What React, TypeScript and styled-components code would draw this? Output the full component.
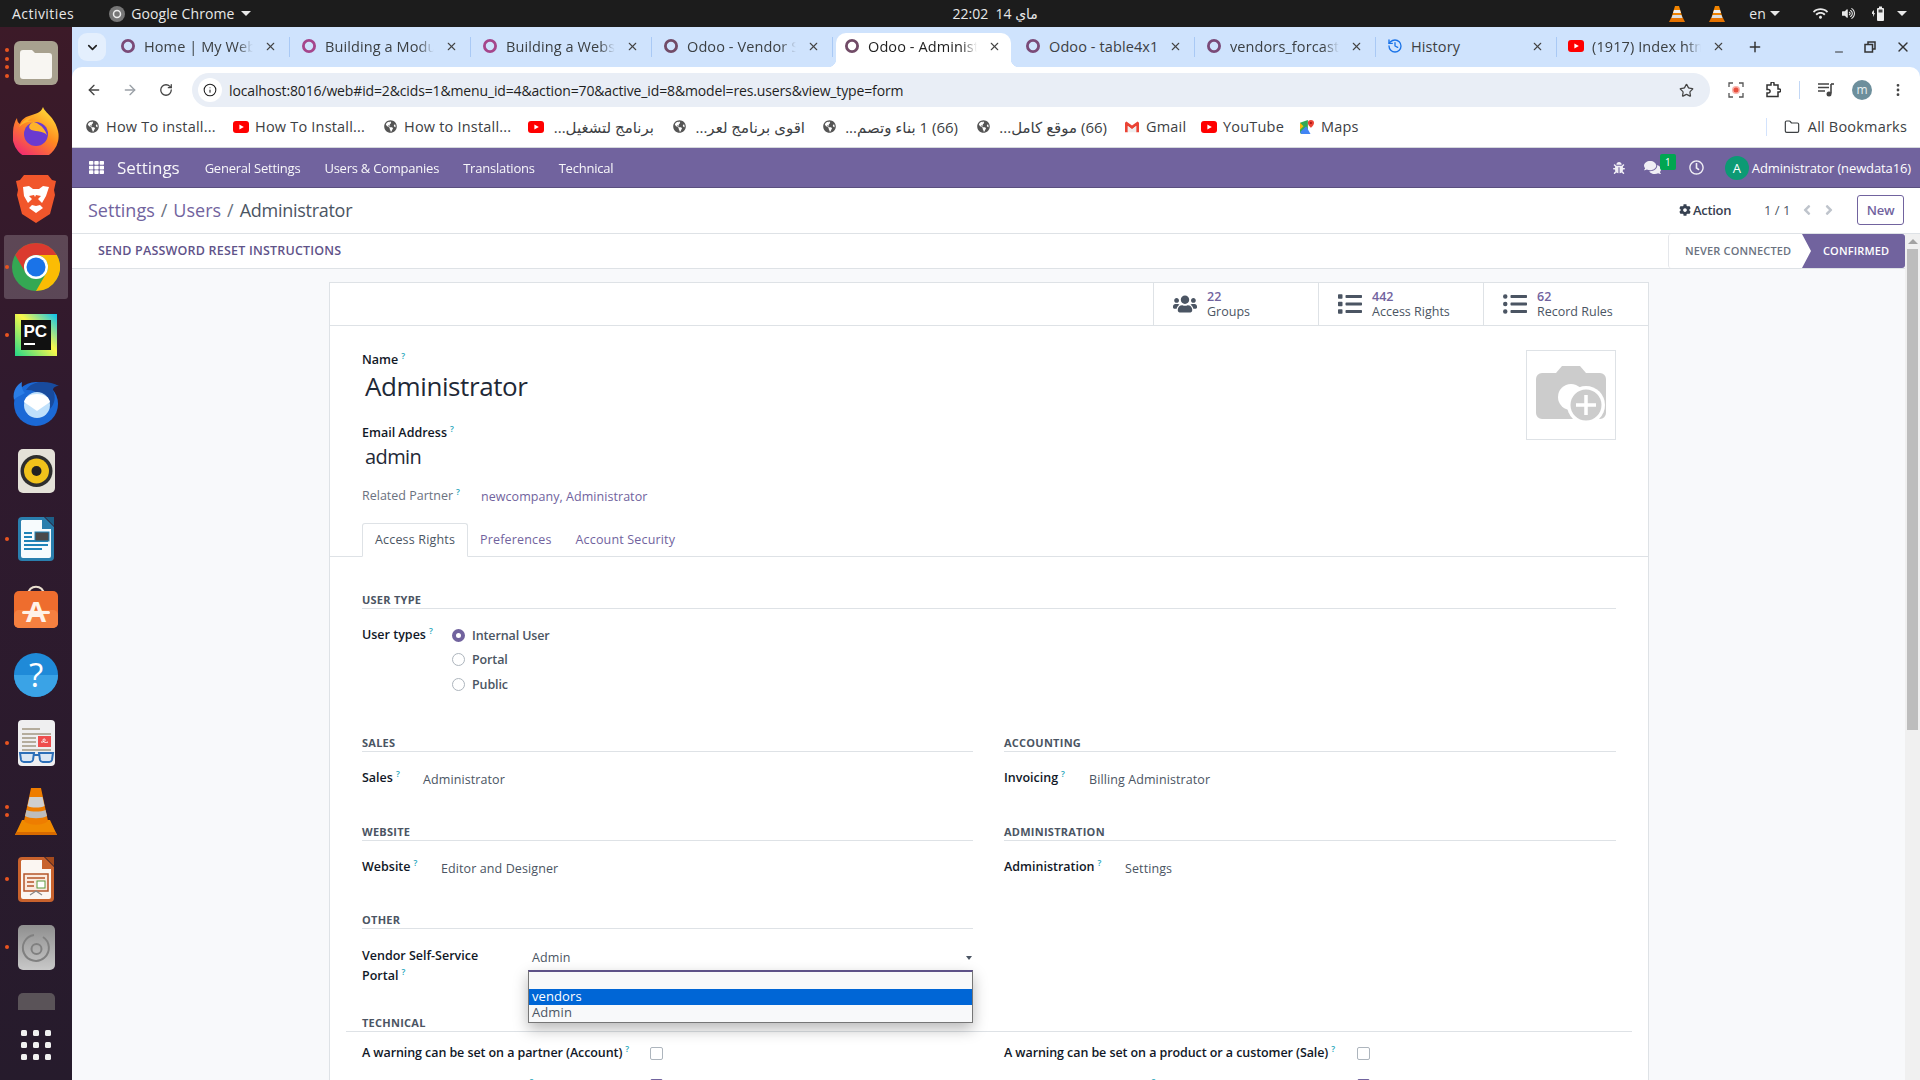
import React from "react";
import styled, { createGlobalStyle } from "styled-components";
import { ArrowLeft, ArrowRight, RotateCw, Star, Info, History, Plus, X, Minus, ChevronDown, Folder, MoreVertical } from "lucide-react";
import { FaUsers, FaList, FaListUl, FaBug, FaComments, FaRegClock, FaCog, FaTh, FaAngleLeft, FaAngleRight, FaGlobeAmericas, FaWifi, FaVolumeUp } from "react-icons/fa";

const UI = `"Open Sans", "DejaVu Sans", sans-serif`;
const PURPLE = "#71639e";

const Global = createGlobalStyle`
  html, body { margin: 0; padding: 0; height: 100%; overflow: hidden; }
  #root { height: 100%; }
  * { box-sizing: border-box; }
  body { font-family: ${UI}; font-size: 13px; color: #374151; }
`;

const Screen = styled.div`display: grid; grid-template-rows: 27px 1fr; height: 1080px; width: 1920px; overflow: hidden;`;

/* ---- GNOME top bar ---- */
const TopBar = styled.div`display: flex; align-items: center; background: #1c1c1c; color: #e8e8e8; font-size: 14px; padding-left: 12px; letter-spacing: 0.1px;`;
const Activities = styled.span`letter-spacing: 0.45px;`;
const AppMenu = styled.div`display: flex; align-items: center; gap: 6px; margin-left: 35px;`;
const Caret = styled.span<{ $ml?: number }>`display: inline-block; width: 0; height: 0; border-left: 5px solid transparent; border-right: 5px solid transparent; border-top: 5px solid #e8e8e8; margin-left: ${p => p.$ml ?? 0}px;`;
const Clock = styled.div`margin-left: 702px; white-space: pre; font-size: 14px;`;
const Tray = styled.div`display: flex; align-items: center; margin-left: auto; padding-right: 15px; height: 100%;`;
const TrayItem = styled.span<{ $w: number; $ml?: number }>`display: inline-flex; align-items: center; justify-content: center; width: ${p => p.$w}px; margin-left: ${p => p.$ml ?? 0}px;`;

/* ---- Body ---- */
const Desk = styled.div`display: flex; min-height: 0;`;
const Dock = styled.div`width: 72px; flex: none; padding-top: 2px; background: linear-gradient(180deg, #3c1a28 0%, #301a2e 35%, #261b2c 100%); overflow: hidden; display: flex; flex-direction: column;`;
const DockItem = styled.div<{ $active?: boolean; $h?: number }>`position: relative; height: ${p => p.$h ?? 68}px; flex: none; display: flex; align-items: ${p => (p.$h ? "flex-start" : "center")}; justify-content: center; overflow: hidden; padding-top: ${p => (p.$h ? 12 : 0)}px;
  &::before { content: ""; display: ${p => (p.$active ? "block" : "none")}; position: absolute; left: 4px; right: 4px; top: 2px; bottom: 2px; border-radius: 3px; background: rgba(255,255,255,0.2); }
  svg { position: relative; }`;
const RunDots = styled.div`position: absolute; left: 5px; top: 0; bottom: 0; display: flex; flex-direction: column; justify-content: center; gap: 4.5px;`;
const RunDot = styled.i`display: block; width: 4px; height: 4px; border-radius: 50%; background: #e95420;`;
const AppGrid = styled.div`flex: none; height: 70px; display: grid; grid-template-columns: repeat(3, 6px); gap: 6px; justify-content: center; align-content: center;`;
const AppDot = styled.i`display: block; width: 6px; height: 6px; border-radius: 1.5px; background: #f0f0f0;`;

const Browser = styled.div`flex: 1; min-width: 0; display: flex; flex-direction: column; background: #fff;`;
const Head = styled.div`background: #cfe3fd;`;
const TabStrip = styled.div`display: flex; height: 40px; padding-top: 6px; align-items: stretch;`;
const TabMenu = styled.div`width: 28px; height: 28px; margin: 0 3px 0 6px; border-radius: 9px; background: #e4effd; display: flex; align-items: center; justify-content: center; color: #222;`;
const Tab = styled.div<{ $active?: boolean; $last?: boolean }>`position: relative; width: 181px; flex: none; height: 34px; display: flex; align-items: center; padding: 0 11px 8px 11px; gap: 8px; font-size: 14.5px; letter-spacing: 0.1px; color: ${p => (p.$active ? "#1f1f1f" : "#3c4043")}; z-index: ${p => (p.$active ? 1 : 0)};
  ${p => p.$active ? `
    background: #fff; border-radius: 10px 10px 0 0; margin: 0 3px; width: 175px; padding-left: 8px; padding-right: 8px;
    &::before, &::after { content: ""; position: absolute; bottom: 0; width: 8px; height: 8px; }
    &::before { left: -8px; background: radial-gradient(circle at 0 0, transparent 8px, #fff 8.5px); }
    &::after { right: -8px; background: radial-gradient(circle at 100% 0, transparent 8px, #fff 8.5px); }
  ` : p.$last ? "" : `&::after { content: ""; position: absolute; right: 0; top: 4px; height: 20px; width: 1.5px; background: #a9c9f5; }`}`;
const TabTitle = styled.span<{ $fade?: boolean }>`flex: 1; min-width: 0; white-space: nowrap; ${p => p.$fade ? `mask-image: linear-gradient(90deg, #000 86%, transparent 100%);` : ""}`;
const TabClose = styled.span`width: 18px; display: flex; justify-content: center; color: #444;`;
const StripPlus = styled.div`width: 34px; display: flex; align-items: center; justify-content: center; height: 28px; color: #333;`;
const WinButtons = styled.div`margin-left: auto; display: flex; height: 28px; align-items: center; color: #333; padding-right: 9px; gap: 13px;`;

const Toolbar = styled.div`height: 43px; padding-top: 3px; background: #fff; border-radius: 10px 10px 0 0; display: flex; align-items: center; color: #444;`;
const NavIcon = styled.span<{ $w: number; $c?: string }>`width: ${p => p.$w}px; flex: none; display: inline-flex; justify-content: center; align-items: center; color: ${p => p.$c ?? "#444"};`;
const Omnibox = styled.div`width: 1518px; height: 34px; margin-left: 4px; border-radius: 17px; background: #e9eef6; display: flex; align-items: center; padding: 0 16px 0 6px;`;
const InfoBadge = styled.span`width: 24px; height: 24px; border-radius: 50%; background: #fff; display: flex; align-items: center; justify-content: center; color: #1f1f1f;`;
const Url = styled.span`margin-left: 7px; font-size: 14px; color: #1f1f1f; letter-spacing: -0.14px; white-space: nowrap;`;
const ToolDivider = styled.span`width: 1px; height: 18px; background: #c2d7f5; margin: 0 13px 0 15px;`;
const Avatar = styled.span`width: 20px; height: 20px; border-radius: 50%; background: #6d8f9c; color: #e8f0f0; font-size: 12px; display: flex; align-items: center; justify-content: center; line-height: 1;`;

const Bookmarks = styled.div`height: 38px; padding: 0 0 4px 13px; background: #fff; border-bottom: 1px solid #d5d8dc; display: flex; align-items: center; font-size: 14.5px; color: #3c4043; letter-spacing: 0.2px;`;
const Bookmark = styled.div<{ $w: number }>`display: flex; align-items: center; gap: 7px; width: ${p => p.$w}px; flex: none; white-space: nowrap;`;
const BookIcon = styled.span`width: 14px; height: 16px; flex: none; display: inline-flex; align-items: center; justify-content: center; color: #555;`;
const ArabicLabel = styled.bdi<{ $w: number }>`display: block; width: ${p => p.$w}px; font-size: 15px; letter-spacing: 0; text-align: right;`;
const AllBookmarks = styled.div`margin-left: auto; display: flex; align-items: center; gap: 8px; padding-right: 13px; border-left: 1.5px solid #d3e3fd; padding-left: 17px; height: 18px;`;

/* ---- Odoo ---- */
const NavBar = styled.div`height: 40px; background: ${PURPLE}; border-bottom: 1px solid #5a4f7f; color: #fff; display: flex; align-items: center; padding-left: 17px; font-size: 13px; letter-spacing: -0.12px;`;
const AppName = styled.div`font-size: 17px; margin: 0 25px 0 13px; letter-spacing: -0.05px; opacity: .95;`;
const NavMenu = styled.div`margin-right: 24px; opacity: .95; letter-spacing: -0.23px;`;
const NavRight = styled.div`margin-left: auto; display: flex; align-items: center; padding-right: 9px;`;
const NavGlyph = styled.span<{ $w: number }>`position: relative; width: ${p => p.$w}px; display: inline-flex; justify-content: center; color: #f0eef5;`;
const Badge = styled.span`position: absolute; top: -5px; right: -7px; width: 16px; height: 16px; border-radius: 2px; background: #00a651; font-size: 10px; display: flex; align-items: center; justify-content: center; color: #fff;`;
const UserDot = styled.span`width: 24px; height: 24px; border-radius: 50%; background: #0c9a74; display: flex; align-items: center; justify-content: center; font-size: 13px; margin-right: 3px;`;

const ControlPanel = styled.div`height: 46px; padding: 0 16px 2px 16px; background: #fff; border-bottom: 1px solid #dee2e6; display: flex; align-items: center;`;
const Crumbs = styled.div`font-size: 18px; color: #71639e; letter-spacing: 0; display: flex; gap: 6px;`;
const CrumbSep = styled.span`color: #6b7280;`;
const CrumbNow = styled.span`color: #4b5563; letter-spacing: -0.28px;`;
const CtrlRight = styled.div`margin-left: auto; display: flex; align-items: center; color: #374151;`;
const ActionBtn = styled.div`display: flex; align-items: center; gap: 2px; font-weight: 600; color: #374151; letter-spacing: -0.3px; width: 85px;`;
const Pager = styled.div`width: 35px; color: #4b5563;`;
const PagerArrows = styled.div`display: flex; gap: 6px; color: #bfc4cc; margin-right: 20px; font-size: 16px;`;
const NewBtn = styled.div`width: 47px; height: 30px; border: 1px solid ${PURPLE}; border-radius: 3px; color: ${PURPLE}; font-weight: 600; display: flex; align-items: center; justify-content: center; letter-spacing: -0.3px;`;

const MainRow = styled.div`flex: 1; min-height: 0; display: flex;`;
const MainCol = styled.div`flex: 1; min-width: 0; display: flex; flex-direction: column; background: #f8f9fb; overflow: hidden;`;
const Scrollbar = styled.div`width: 15px; flex: none; background: #f0f0f0; display: flex; flex-direction: column; align-items: center; padding-top: 5px;`;
const ScrollUp = styled.i`width: 0; height: 0; border-left: 5px solid transparent; border-right: 5px solid transparent; border-bottom: 5px solid #a3a3a3; margin-bottom: 5px;`;
const ScrollThumb = styled.div`width: 11px; height: 481px; background: #bdbdbd;`;

const StatusRow = styled.div`height: 35px; flex: none; background: #fff; border-bottom: 1px solid #dee2e6; display: flex; align-items: center; padding-left: 26px;`;
const SendBtn = styled.div`font-size: 12.5px; font-weight: 600; color: #5f5389; letter-spacing: 0.2px; margin-top: -2px;`;
const StatusBar = styled.div`margin-left: auto; display: flex; height: 100%; font-size: 11px; font-weight: 600; letter-spacing: 0.15px;`;
const StatusOff = styled.div`width: 144px; padding-left: 16px; padding-bottom: 2px; border-left: 1px solid #e5e7eb; border-radius: 3px 0 0 3px; display: flex; align-items: center; color: #6b7280; margin-right: -10px;`;
const StatusOn = styled.div`width: 103px; background: ${PURPLE}; color: #fff; display: flex; align-items: center; padding: 0 0 2px 21px; clip-path: polygon(0 0, 100% 0, 100% 100%, 0 100%, 9px 50%); border-radius: 0 3px 3px 0;`;

const Sheet = styled.div`width: 1320px; margin: 13px 0 0 257px; background: #fff; border: 1px solid #dee2e6; border-bottom: 0; flex: none;`;
const StatBar = styled.div`height: 43px; border-bottom: 1px solid #dee2e6; display: flex; justify-content: flex-end;`;
const StatBtn = styled.div`width: 165px; border-left: 1px solid #dee2e6; display: flex; align-items: center; padding-left: 19px; gap: 10px; color: #4b5563;`;
const StatText = styled.div`display: flex; flex-direction: column; font-size: 12.5px; line-height: 15px; letter-spacing: 0;`;
const StatNum = styled.span`color: ${PURPLE}; font-weight: 600;`;

const Head2 = styled.div`display: flex; justify-content: space-between; padding: 25px 32px 0 32px;`;
const FieldLabel = styled.div<{ $muted?: boolean; $w?: number }>`font-weight: ${p => (p.$muted ? 400 : 600)}; font-size: 12.5px; line-height: 18px; color: ${p => (p.$muted ? "#6b7280" : "#111827")}; letter-spacing: 0; white-space: nowrap; ${p => (p.$w ? `width: ${p.$w}px; flex: none;` : "")}`;
const Help = styled.sup`color: #17a2b8; font-size: 8.5px; font-weight: 600; margin-left: 3px; line-height: 0;`;
const NameValue = styled.div`font-size: 26px; line-height: 36px; margin-top: -1px; padding-left: 3px; color: #1f2937; letter-spacing: -0.4px;`;
const EmailBlock = styled.div`margin-top: 20px;`;
const EmailValue = styled.div`font-size: 20px; line-height: 28px; margin-top: 1px; padding-left: 3px; color: #1f2937; letter-spacing: -0.6px;`;
const RelatedRow = styled.div`display: flex; margin-top: 16px; align-items: center;`;
const RelatedLink = styled.span`margin-left: 19px; color: ${PURPLE}; font-size: 12.5px; letter-spacing: 0.05px;`;
const Photo = styled.div`width: 90px; height: 90px; margin-top: -1px; border: 1px solid #dee2e6; display: flex; align-items: center; justify-content: center;`;

const Tabs = styled.div`margin-top: 18px; height: 34px; border-bottom: 1px solid #dee2e6; padding-left: 32px; display: flex;`;
const FormTab = styled.div<{ $active?: boolean }>`height: 34px; display: flex; align-items: center; padding: 0 12px 2px; font-size: 12.5px; letter-spacing: 0.17px; color: ${p => (p.$active ? "#4b5563" : PURPLE)}; ${p => p.$active ? `background: #fff; border: 1px solid #dee2e6; border-bottom-color: #fff; border-radius: 3px 3px 0 0;` : ""}`;

const Pane = styled.div`padding: 35px 32px 0 32px;`;
const GroupTitle = styled.div<{ $wide?: boolean }>`height: 17px; border-bottom: 1px solid #dee2e6; font-size: 11px; font-weight: 700; color: #4b5563; line-height: 16px; letter-spacing: 0.25px; ${p => p.$wide ? `margin: 0 -16px; padding-left: 16px;` : ""}`;
const UserTypeRow = styled.div`display: flex; margin-top: 17px;`;
const UserTypeLabel = styled.div`width: 90px; flex: none;`;
const RadioList = styled.div`display: flex; flex-direction: column; gap: 6.5px;`;
const RadioRow = styled.div`display: flex; align-items: center; height: 18px; gap: 7px; font-size: 12.5px; font-weight: 600; color: #4b5563; letter-spacing: -0.12px;`;
const Radio = styled.i<{ $on?: boolean }>`width: 13px; height: 13px; border-radius: 50%; border: ${p => (p.$on ? `4px solid ${PURPLE}` : "1px solid #adb5bd")}; background: #fff; display: block;`;

const Columns = styled.div`display: grid; grid-template-columns: 611px 612px; column-gap: 31px; margin-top: 42px;`;
const Group = styled.div<{ $h: number }>`height: ${p => p.$h}px; position: relative;`;
const FieldRow = styled.div`display: flex; margin-top: 17px;`;
const FieldText = styled.div`margin-top: 2px; font-size: 12.5px; line-height: 18px; color: #4b5563; letter-spacing: 0.1px;`;
const VendorLabel = styled.div`width: 167px; flex: none; font-weight: 600; font-size: 12.5px; line-height: 20px; color: #111827; letter-spacing: 0;`;
const SelectBox = styled.div`position: relative; flex: 1; height: 18px; margin-top: 3px; padding-left: 3px; font-size: 12.5px; line-height: 18px; color: #4b5563; letter-spacing: 0.1px;`;
const SelectCaret = styled.i`position: absolute; right: 1px; top: 7px; width: 0; height: 0; border-left: 3px solid transparent; border-right: 3px solid transparent; border-top: 4px solid #4b5563;`;
const SelectPopup = styled.div`position: absolute; left: -1px; right: 0; top: 21px; height: 53px; background: #f8f9fa; border: 1px solid #767676; border-top: 2px solid #5d5288; box-shadow: 0 6px 14px rgba(0,0,0,.28); padding-top: 17px; z-index: 5;`;
const SelectOption = styled.div<{ $on?: boolean }>`height: 16px; line-height: 15px; padding-left: 3px; font-size: 13px; color: ${p => (p.$on ? "#fff" : "#4b5563")}; background: ${p => (p.$on ? "#0066d6" : "transparent")};`;

const WarnGrid = styled.div`display: grid; grid-template-columns: 611px 612px; column-gap: 31px; margin-top: 11px;`;
const WarnRow = styled.div`display: flex; align-items: flex-start; height: 32px; font-size: 12.5px; font-weight: 600; color: #111827; letter-spacing: -0.08px; white-space: nowrap;`;
const WarnLabel = styled.div<{ $w: number; $low?: boolean }>`width: ${p => p.$w}px; flex: none; line-height: 18px; padding-top: ${p => (p.$low ? 2 : 1)}px;`;
const Check = styled.i<{ $on?: boolean }>`display: block; width: 13px; height: 13px; margin-top: 4px; border-radius: 2px; border: 1px solid ${p => (p.$on ? PURPLE : "#adb5bd")}; background: ${p => (p.$on ? PURPLE : "#fff")};`;

const Odoo = ({ c = "#714b67" }: { c?: string }) => (
  <svg width="16" height="16" viewBox="0 0 16 16" style={{ flex: "none" }}><circle cx="8" cy="8" r="5.6" fill="none" stroke={c} strokeWidth="2.8" /></svg>
);
const YT = () => (
  <svg width="16" height="12" viewBox="0 0 16 12" style={{ flex: "none" }}><rect width="16" height="12" rx="3" fill="#f00" /><path d="M6.4 3.4 10.8 6 6.4 8.6z" fill="#fff" /></svg>
);
const Gmail = () => (
  <svg width="15" height="12" viewBox="0 0 15 12"><path d="M0 1.500v10h3V5l4.500 3.400L12 5v6.500h3v-10L13.500 0 7.500 4.500 1.500 0z" fill="#ea4335" /><path d="M3 5v6.500h9V5L7.500 8.400z" fill="#eee" /></svg>
);
const MapsIcon = () => (
  <svg width="16" height="16" viewBox="0 0 16 16"><path d="M0 3l9-3v16H2a2 2 0 0 1-2-2z" fill="#34a853" /><path d="M0 14l7-7 5 9H2z" fill="#4285f4" /><path d="M0 3l4 4-4 4z" fill="#fbbc04" /><path d="M12.500 0a3.500 3.500 0 0 1 3.500 3.500C16 6 12.500 9 12.500 9S9 6 9 3.500A3.500 3.500 0 0 1 12.500 0z" fill="#ea4335" /><circle cx="12.500" cy="3.500" r="1.200" fill="#a50e0e" /></svg>
);
const Cone = ({ s = 18 }: { s?: number }) => (
  <svg width={s} height={s} viewBox="0 0 18 18"><path d="M7 1h4l4 13h-12z" fill="#f08300" /><path d="M6 5h6l1 3H5z" fill="#eee" /><path d="M4.500 10h9l1 3h-11z" fill="#ddd" /><path d="M1 17l2-4h12l2 4z" fill="#e57200" /></svg>
);

const dockIcons: { icon: React.ReactNode; dots?: number; active?: boolean }[] = [
  { dots: 4, icon: <svg width="44" height="44" viewBox="0 0 44 44"><rect width="44" height="44" rx="6" fill="#a8a18f" /><path d="M6 12a3 3 0 0 1 3-3h9l3 3h14a3 3 0 0 1 3 3v20a3 3 0 0 1-3 3H9a3 3 0 0 1-3-3z" fill="#f8f6f2" /></svg> },
  { icon: <svg width="46" height="48" viewBox="0 0 46 48"><defs><linearGradient id="ff" x1="0.8" y1="0" x2="0.2" y2="1"><stop offset="0" stopColor="#ffe13a" /><stop offset=".45" stopColor="#ff8a1f" /><stop offset="1" stopColor="#f0207a" /></linearGradient></defs><path d="M30 0c2 6 12 10 15 24a23 23 0 1 1-45 1c0-6 2-11 4-14 0 3 1 5 3 6 1-4 5-7 9-8 6-2 12-3 14-9z" fill="url(#ff)" /><circle cx="23" cy="27" r="12" fill="#6b3ad0" /><path d="M6 20c4-4 9-6 14-5-3 2-5 4-3 7 3 3 13 1 17 6-3-9-11-14-19-14 1-2 3-3 6-4-6 0-12 4-15 10z" fill="#ffb22a" /></svg> },
  { icon: <svg width="40" height="48" viewBox="0 0 40 48"><path d="M8 0h24l4 5 4 1-2 9 1 5-5 19-14 9-14-9L1 20l1-5-2-9 4-1z" fill="#f1562b" /><path d="M20 38l-7-5 3-3 4 1 4-1 3 3zM7 12l6-1 4 3h6l4-3 6 1-3 9-4 7-4-4 3-3-5-1-1 2-1-2-5 1 3 3-4 4-4-7z" fill="#fff" /></svg> },
  { active: true, dots: 1, icon: <svg width="48" height="48" viewBox="0 0 48 48"><circle cx="24" cy="24" r="24" fill="#34a853" /><path d="M44.800 12A24 24 0 0 1 24 48l10.400-18A12 12 0 0 0 24 12z" fill="#fbbc04" /><path d="M24 0a24 24 0 0 1 20.800 12H24a12 12 0 0 0-10.400 18L3.200 12A24 24 0 0 1 24 0z" fill="#db3a2f" /><circle cx="24" cy="24" r="12" fill="#fff" /><circle cx="24" cy="24" r="9.500" fill="#1a73e8" /></svg> },
  { dots: 1, icon: <svg width="42" height="42" viewBox="0 0 42 42"><defs><linearGradient id="pc" x1="0" y1="1" x2="1" y2="0"><stop offset="0" stopColor="#21d789" /><stop offset=".55" stopColor="#fcf84a" /><stop offset="1" stopColor="#07c3f2" /></linearGradient></defs><rect width="42" height="42" fill="url(#pc)" /><rect x="6" y="6" width="30" height="30" fill="#111" /><text x="8.500" y="23" fontFamily="Liberation Sans, sans-serif" fontSize="17" fontWeight="700" fill="#fff">PC</text><rect x="9" y="29" width="11" height="2" fill="#fff" /></svg> },
  { icon: <svg width="48" height="46" viewBox="0 0 48 46"><circle cx="24" cy="24" r="22" fill="#1b69d6" /><path d="M2 20C0 10 6 4 10 2c-1 5 1 9 3 11-5 3-9 4-11 7z" fill="#2a7de6" /><path d="M14 10C20 0 36 0 47 6c-4 0-6 2-6 4 3 6 2 14-3 19-4-12-14-20-24-19z" fill="#184b9e" /><circle cx="25" cy="25" r="13" fill="#bfe0fb" /><path d="M12 22l13 9 13-9c-1-5-6-8-13-8s-12 3-13 8z" fill="#fff" /></svg> },
  { icon: <svg width="37" height="44" viewBox="0 0 37 44"><rect width="37" height="44" rx="5" fill="#e4e1d8" /><circle cx="18.500" cy="22" r="16" fill="#2e2e2e" /><circle cx="18.500" cy="22" r="12.500" fill="#f1c21b" /><circle cx="18.500" cy="22" r="5" fill="#222" /></svg> },
  { dots: 1, icon: <svg width="36" height="44" viewBox="0 0 36 44"><path d="M4 0h22l10 10v30a4 4 0 0 1-4 4H4a4 4 0 0 1-4-4V4a4 4 0 0 1 4-4z" fill="#2a7fae" /><path d="M4 3h20v9h9v27a2 2 0 0 1-2 2H5a2 2 0 0 1-2-2V4z" fill="#f7fbfd" /><path d="M27 0h9v9z" fill="#1d5f87" /><path d="M6 16h8M6 20h8M6 24h24M6 28h24M6 32h18" stroke="#1f83b8" strokeWidth="2" /><rect x="17" y="15" width="14" height="9" fill="#4a4a4a" stroke="#1f83b8" /></svg> },
  { icon: <svg width="44" height="44" viewBox="0 0 44 44"><path d="M14 10c0-11 16-11 16 0" fill="none" stroke="#eadfcf" strokeWidth="2.200" /><rect y="6" width="44" height="37" rx="5" fill="#ee6d2e" /><rect y="25" width="44" height="18" rx="5" fill="#f58040" /><text x="22" y="37" textAnchor="middle" fontFamily="Liberation Sans, sans-serif" fontSize="30" fontWeight="700" fill="#fff2e8">A</text><rect x="8" y="26" width="28" height="3" rx="1.500" fill="#fff2e8" /></svg> },
  { icon: <svg width="44" height="44" viewBox="0 0 44 44"><circle cx="22" cy="22" r="22" fill="#1f8ad8" /><path d="M0 22h44a22 22 0 0 1-44 0z" fill="#3aa3e6" /><text x="22" y="34" textAnchor="middle" fontFamily="Open Sans, sans-serif" fontSize="33" fontWeight="400" fill="#fff">?</text></svg> },
  { dots: 1, icon: <svg width="37" height="46" viewBox="0 0 37 46"><rect width="37" height="46" rx="4" fill="#efeff0" /><path d="M4 9h18M4 14h29M4 18h14M4 22h14M4 26h14M4 30h29" stroke="#b5ad9d" strokeWidth="1.800" /><rect x="20" y="16" width="13" height="11" fill="#ee4d4d" /><path d="M23 22c3 1 6-3 3-3-2 0-1 5 4 3" fill="none" stroke="#fff" strokeWidth="1" /><path d="M2 33h14l-1 7a3 3 0 0 1-3 2H6a3 3 0 0 1-3-2z" fill="#dbe7f3" stroke="#2c6fb8" strokeWidth="2" /><path d="M21 33h14l-1 7a3 3 0 0 1-3 2h-6a3 3 0 0 1-3-2z" fill="#dbe7f3" stroke="#2c6fb8" strokeWidth="2" /><path d="M16 35h5" stroke="#2c6fb8" strokeWidth="2" /></svg> },
  { dots: 2, icon: <svg width="42" height="47" viewBox="0 0 42 47"><path d="M0 47l7-15h28l7 15z" fill="#f08a00" /><path d="M16 0h10l7 33c-5 5-19 5-24 0z" fill="#ee7d00" /><path d="M14.500 9h13l2 9c-4 2-13 2-17 0z" fill="#cfcfcf" /><path d="M11.500 22c5 2 14 2 19 0l1.500 6c-5 3-17 3-22 0z" fill="#bdbdbd" /><path d="M0 47l1.500-3h39l1.500 3z" fill="#d76a00" /></svg> },
  { dots: 1, icon: <svg width="36" height="45" viewBox="0 0 36 45"><path d="M4 0h22l10 10v31a4 4 0 0 1-4 4H4a4 4 0 0 1-4-4V4a4 4 0 0 1 4-4z" fill="#c8622d" /><path d="M4 3h20v9h9v28a2 2 0 0 1-2 2H5a2 2 0 0 1-2-2V4z" fill="#fbf6f2" /><path d="M27 0h9v9z" fill="#a34a1d" /><rect x="6" y="17" width="24" height="17" fill="#fbeadf" stroke="#b5552a" strokeWidth="1.500" /><path d="M9 21h18M9 25h7M9 29h7" stroke="#b5552a" strokeWidth="1.600" /><rect x="19" y="24" width="8" height="7" fill="#fff" stroke="#5b9a3c" /><path d="M12 38l6-4 6 4" fill="none" stroke="#888" strokeWidth="1.200" /></svg> },
  { dots: 1, icon: <svg width="37" height="45" viewBox="0 0 37 45"><defs><linearGradient id="dk" x1="0" y1="0" x2="0" y2="1"><stop offset="0" stopColor="#8f8f8f" /><stop offset="1" stopColor="#c8c8c8" /></linearGradient></defs><rect width="37" height="45" rx="5" fill="url(#dk)" /><path d="M25 12a13 13 0 1 1-9-2" fill="none" stroke="#808080" strokeWidth="2" /><circle cx="18.500" cy="24" r="5" fill="none" stroke="#808080" strokeWidth="2" /></svg> },
];

const tabs: { t: string; c?: string; fade?: boolean; active?: boolean }[] = [
  { t: "Home | My Webs", c: "#7a4a78", fade: true },
  { t: "Building a Modu", c: "#a5468c", fade: true },
  { t: "Building a Webs", c: "#a5468c", fade: true },
  { t: "Odoo - Vendor S", c: "#714b67", fade: true },
  { t: "Odoo - Administ", c: "#714b67", fade: true, active: true },
  { t: "Odoo - table4x1", c: "#7a4a78" },
  { t: "vendors_forcast", c: "#7a4a78", fade: true },
];

const TabX = () => <TabClose><X size={13} strokeWidth={2} /></TabClose>;

export default function App() {
  return (
    <Screen>
      <Global />
      <TopBar>
        <Activities>Activities</Activities>
        <AppMenu>
          <svg width="16" height="16" viewBox="0 0 16 16"><circle cx="8" cy="8" r="8" fill="#777" /><circle cx="8" cy="8" r="3.500" fill="none" stroke="#eee" strokeWidth="1.500" /></svg>
          <span>Google Chrome</span>
          <Caret />
        </AppMenu>
        <Clock>22:02  14 ماي</Clock>
        <Tray>
          <TrayItem $w={40}><Cone /></TrayItem>
          <TrayItem $w={40}><Cone /></TrayItem>
          <TrayItem $w={55}>en<Caret $ml={4} /></TrayItem>
          <TrayItem $w={32} $ml={12}><FaWifi size={15} /></TrayItem>
          <TrayItem $w={24}><FaVolumeUp size={13} /></TrayItem>
          <TrayItem $w={36}><svg width="12" height="16" viewBox="0 0 12 16"><path d="M0 6l2-2v3h1L1 11V8H0z" fill="#ddd" /><rect x="5" y="2" width="7" height="13" rx="1" fill="#eee" /><rect x="7" y="0.500" width="3" height="1.500" fill="#eee" /><rect x="6.500" y="3.500" width="4" height="3" fill="#444" /></svg></TrayItem>
          <TrayItem $w={6} $ml={3}><Caret /></TrayItem>
        </Tray>
      </TopBar>
      <Desk>
        <Dock>
          {dockIcons.map((d, i) => (
            <DockItem key={i} $active={d.active}>
              {d.dots ? <RunDots>{Array.from({ length: d.dots }).map((_, k) => <RunDot key={k} />)}</RunDots> : null}
              {d.icon}
            </DockItem>
          ))}
          <DockItem $h={29}>
            <svg width="37" height="17" viewBox="0 0 37 17"><path d="M0 17V5a5 5 0 0 1 5-5h27a5 5 0 0 1 5 5v12z" fill="#5a5358" /></svg>
          </DockItem>
          <AppGrid>{Array.from({ length: 9 }).map((_, i) => <AppDot key={i} />)}</AppGrid>
        </Dock>
        <Browser>
          <Head>
            <TabStrip>
              <TabMenu><ChevronDown size={15} strokeWidth={2.6} /></TabMenu>
              {tabs.map(t => (
                <Tab key={t.t} $active={t.active}>
                  <Odoo c={t.c} />
                  <TabTitle $fade={t.fade}>{t.t}</TabTitle>
                  <TabX />
                </Tab>
              ))}
              <Tab>
                <History size={16} color="#1a73e8" style={{ flex: "none" }} />
                <TabTitle>History</TabTitle>
                <TabX />
              </Tab>
              <Tab $last>
                <YT />
                <TabTitle $fade>(1917) Index htm</TabTitle>
                <TabX />
              </Tab>
              <StripPlus><Plus size={16} strokeWidth={2.2} /></StripPlus>
              <WinButtons>
                <Minus size={12} strokeWidth={2} style={{ marginTop: 9 }} />
                <svg width="12" height="12" viewBox="0 0 12 12" style={{ margin: "0 6px" }}><rect x="1" y="3.500" width="7.500" height="7.500" fill="none" stroke="#333" strokeWidth="1.500" /><path d="M4 3V1h7v7H9" fill="none" stroke="#333" strokeWidth="1.500" /></svg>
                <X size={16} strokeWidth={2} />
              </WinButtons>
            </TabStrip>
            <Toolbar>
              <NavIcon $w={44}><ArrowLeft size={16} strokeWidth={2} /></NavIcon>
              <NavIcon $w={28} $c="#9aa0a6"><ArrowRight size={16} strokeWidth={2} /></NavIcon>
              <NavIcon $w={44}><RotateCw size={14} strokeWidth={2.200} /></NavIcon>
              <Omnibox>
                <InfoBadge><Info size={14} strokeWidth={1.800} /></InfoBadge>
                <Url>localhost:8016/web#id=2&amp;cids=1&amp;menu_id=4&amp;action=70&amp;active_id=8&amp;model=res.users&amp;view_type=form</Url>
                <Star size={15} strokeWidth={2} style={{ marginLeft: "auto" }} />
              </Omnibox>
              <NavIcon $w={52}>
                <svg width="16" height="16" viewBox="0 0 16 16"><path d="M1 5V1h4M11 1h4v4M15 11v4h-4M5 15H1v-4" fill="none" stroke="#555" strokeWidth="1.300" /><circle cx="8" cy="8" r="4" fill="#f8b4ac" /><circle cx="8" cy="8" r="2.500" fill="#e8503f" /></svg>
              </NavIcon>
              <NavIcon $w={22}>
                <svg width="16" height="16" viewBox="0 0 16 16"><path d="M2 3h4V1.500a1.500 1.500 0 0 1 3 0V3h4v4h1.200a1.500 1.500 0 0 1 0 3H13v4.500H2V11h1.300a1.800 1.800 0 0 0 0-3.600H2z" fill="none" stroke="#333" strokeWidth="1.500" /></svg>
              </NavIcon>
              <ToolDivider />
              <NavIcon $w={26}>
                <svg width="16" height="14" viewBox="0 0 16 14"><path d="M0 1h11M0 4.500h11M0 8h7" stroke="#444" strokeWidth="1.400" /><path d="M13 1v9.500" stroke="#444" strokeWidth="1.600" /><path d="M13 1h3" stroke="#444" strokeWidth="1.600" /><circle cx="11" cy="11" r="2.500" fill="#444" /></svg>
              </NavIcon>
              <NavIcon $w={46}><Avatar>m</Avatar></NavIcon>
              <NavIcon $w={26}><MoreVertical size={16} strokeWidth={2.200} /></NavIcon>
            </Toolbar>
          </Head>
          <Bookmarks>
            <Bookmark $w={149}><BookIcon><FaGlobeAmericas size={13} /></BookIcon>How To install...</Bookmark>
            <Bookmark $w={149}><BookIcon><YT /></BookIcon>How To Install...</Bookmark>
            <Bookmark $w={146}><BookIcon><FaGlobeAmericas size={13} /></BookIcon>How to Install...</Bookmark>
            <Bookmark $w={143}><BookIcon><YT /></BookIcon><ArabicLabel dir="rtl" $w={104}>برنامج لتشغيل...</ArabicLabel></Bookmark>
            <Bookmark $w={150}><BookIcon><FaGlobeAmericas size={13} /></BookIcon><ArabicLabel dir="rtl" $w={112}>اقوى برنامج لعر...</ArabicLabel></Bookmark>
            <Bookmark $w={154}><BookIcon><FaGlobeAmericas size={13} /></BookIcon><ArabicLabel dir="rtl" $w={115}>(66) 1 بناء وتصم...</ArabicLabel></Bookmark>
            <Bookmark $w={149}><BookIcon><FaGlobeAmericas size={13} /></BookIcon><ArabicLabel dir="rtl" $w={110}>(66) موقع كامل...</ArabicLabel></Bookmark>
            <Bookmark $w={77}><BookIcon><Gmail /></BookIcon>Gmail</Bookmark>
            <Bookmark $w={98}><BookIcon><YT /></BookIcon>YouTube</Bookmark>
            <Bookmark $w={60}><BookIcon><MapsIcon /></BookIcon>Maps</Bookmark>
            <AllBookmarks><Folder size={16} strokeWidth={1.800} />All Bookmarks</AllBookmarks>
          </Bookmarks>

          <NavBar>
            <FaTh size={15} />
            <AppName>Settings</AppName>
            <NavMenu>General Settings</NavMenu>
            <NavMenu>Users &amp; Companies</NavMenu>
            <NavMenu>Translations</NavMenu>
            <NavMenu>Technical</NavMenu>
            <NavRight>
              <NavGlyph $w={33}><FaBug size={12} /></NavGlyph>
              <NavGlyph $w={33}><FaComments size={17} /><Badge>1</Badge></NavGlyph>
              <NavGlyph $w={56}><FaRegClock size={15} /></NavGlyph>
              <UserDot>A</UserDot>
              <span>Administrator (newdata16)</span>
            </NavRight>
          </NavBar>
          <ControlPanel>
            <Crumbs>
              <span>Settings</span><CrumbSep>/</CrumbSep><span>Users</span><CrumbSep>/</CrumbSep><CrumbNow>Administrator</CrumbNow>
            </Crumbs>
            <CtrlRight>
              <ActionBtn><FaCog size={12} />Action</ActionBtn>
              <Pager>1 / 1</Pager>
              <PagerArrows><FaAngleLeft /><FaAngleRight /></PagerArrows>
              <NewBtn>New</NewBtn>
            </CtrlRight>
          </ControlPanel>
          <MainRow>
            <MainCol>
              <StatusRow>
                <SendBtn>SEND PASSWORD RESET INSTRUCTIONS</SendBtn>
                <StatusBar>
                  <StatusOff>NEVER CONNECTED</StatusOff>
                  <StatusOn>CONFIRMED</StatusOn>
                </StatusBar>
              </StatusRow>
              <Sheet>
                <StatBar>
                  <StatBtn><FaUsers size={24} /><StatText><StatNum>22</StatNum>Groups</StatText></StatBtn>
                  <StatBtn><FaList size={24} /><StatText><StatNum>442</StatNum>Access Rights</StatText></StatBtn>
                  <StatBtn><FaListUl size={24} /><StatText><StatNum>62</StatNum>Record Rules</StatText></StatBtn>
                </StatBar>
                <Head2>
                  <div>
                    <FieldLabel>Name<Help>?</Help></FieldLabel>
                    <NameValue>Administrator</NameValue>
                    <EmailBlock>
                      <FieldLabel>Email Address<Help>?</Help></FieldLabel>
                      <EmailValue>admin</EmailValue>
                    </EmailBlock>
                    <RelatedRow>
                      <FieldLabel $muted $w={100}>Related Partner<Help>?</Help></FieldLabel>
                      <RelatedLink>newcompany, Administrator</RelatedLink>
                    </RelatedRow>
                  </div>
                  <Photo>
                    <svg width="70" height="60" viewBox="0 0 70 60">
                      <path d="M6 8h14l6-7h18l6 7h14a6 6 0 0 1 6 6v34a6 6 0 0 1-6 6H6a6 6 0 0 1-6-6V14a6 6 0 0 1 6-6z" fill="#ccc" />
                      <circle cx="35" cy="32" r="13" fill="#fff" />
                      <circle cx="50" cy="40" r="19" fill="#fff" />
                      <circle cx="50" cy="40" r="15.500" fill="#ccc" />
                      <path d="M50 30v20M40 40h20" stroke="#fff" strokeWidth="3.500" />
                    </svg>
                  </Photo>
                </Head2>
                <Tabs>
                  <FormTab $active>Access Rights</FormTab>
                  <FormTab>Preferences</FormTab>
                  <FormTab>Account Security</FormTab>
                </Tabs>
                <Pane>
                  <GroupTitle>USER TYPE</GroupTitle>
                  <UserTypeRow>
                    <UserTypeLabel><FieldLabel>User types<Help>?</Help></FieldLabel></UserTypeLabel>
                    <RadioList>
                      <RadioRow><Radio $on />Internal User</RadioRow>
                      <RadioRow><Radio />Portal</RadioRow>
                      <RadioRow><Radio />Public</RadioRow>
                    </RadioList>
                  </UserTypeRow>
                  <Columns>
                    <div>
                      <Group $h={89}>
                        <GroupTitle>SALES</GroupTitle>
                        <FieldRow><FieldLabel $w={61}>Sales<Help>?</Help></FieldLabel><FieldText>Administrator</FieldText></FieldRow>
                      </Group>
                      <Group $h={88}>
                        <GroupTitle>WEBSITE</GroupTitle>
                        <FieldRow><FieldLabel $w={79}>Website<Help>?</Help></FieldLabel><FieldText>Editor and Designer</FieldText></FieldRow>
                      </Group>
                      <Group $h={103}>
                        <GroupTitle>OTHER</GroupTitle>
                        <FieldRow>
                          <VendorLabel>Vendor Self-Service<br />Portal<Help>?</Help></VendorLabel>
                          <SelectBox>
                            Admin
                            <SelectCaret />
                            <SelectPopup>
                              <SelectOption $on>vendors</SelectOption>
                              <SelectOption>Admin</SelectOption>
                            </SelectPopup>
                          </SelectBox>
                        </FieldRow>
                      </Group>
                    </div>
                    <div>
                      <Group $h={89}>
                        <GroupTitle>ACCOUNTING</GroupTitle>
                        <FieldRow><FieldLabel $w={85}>Invoicing<Help>?</Help></FieldLabel><FieldText>Billing Administrator</FieldText></FieldRow>
                      </Group>
                      <Group $h={88}>
                        <GroupTitle>ADMINISTRATION</GroupTitle>
                        <FieldRow><FieldLabel $w={121}>Administration<Help>?</Help></FieldLabel><FieldText>Settings</FieldText></FieldRow>
                      </Group>
                    </div>
                  </Columns>
                  <GroupTitle $wide>TECHNICAL</GroupTitle>
                  <WarnGrid>
                    <WarnRow><WarnLabel $w={288}>A warning can be set on a partner (Account)<Help>?</Help></WarnLabel><Check /></WarnRow>
                    <WarnRow><WarnLabel $w={353}>A warning can be set on a product or a customer (Sale)<Help>?</Help></WarnLabel><Check /></WarnRow>
                    <WarnRow><WarnLabel $w={288} $low>Access to Private Addresses<Help>?</Help></WarnLabel><Check $on /></WarnRow>
                    <WarnRow><WarnLabel $w={353} $low>Access to export feature<Help>?</Help></WarnLabel><Check $on /></WarnRow>
                  </WarnGrid>
                </Pane>
              </Sheet>
            </MainCol>
            <Scrollbar>
              <ScrollUp />
              <ScrollThumb />
            </Scrollbar>
          </MainRow>
        </Browser>
      </Desk>
    </Screen>
  );
}
